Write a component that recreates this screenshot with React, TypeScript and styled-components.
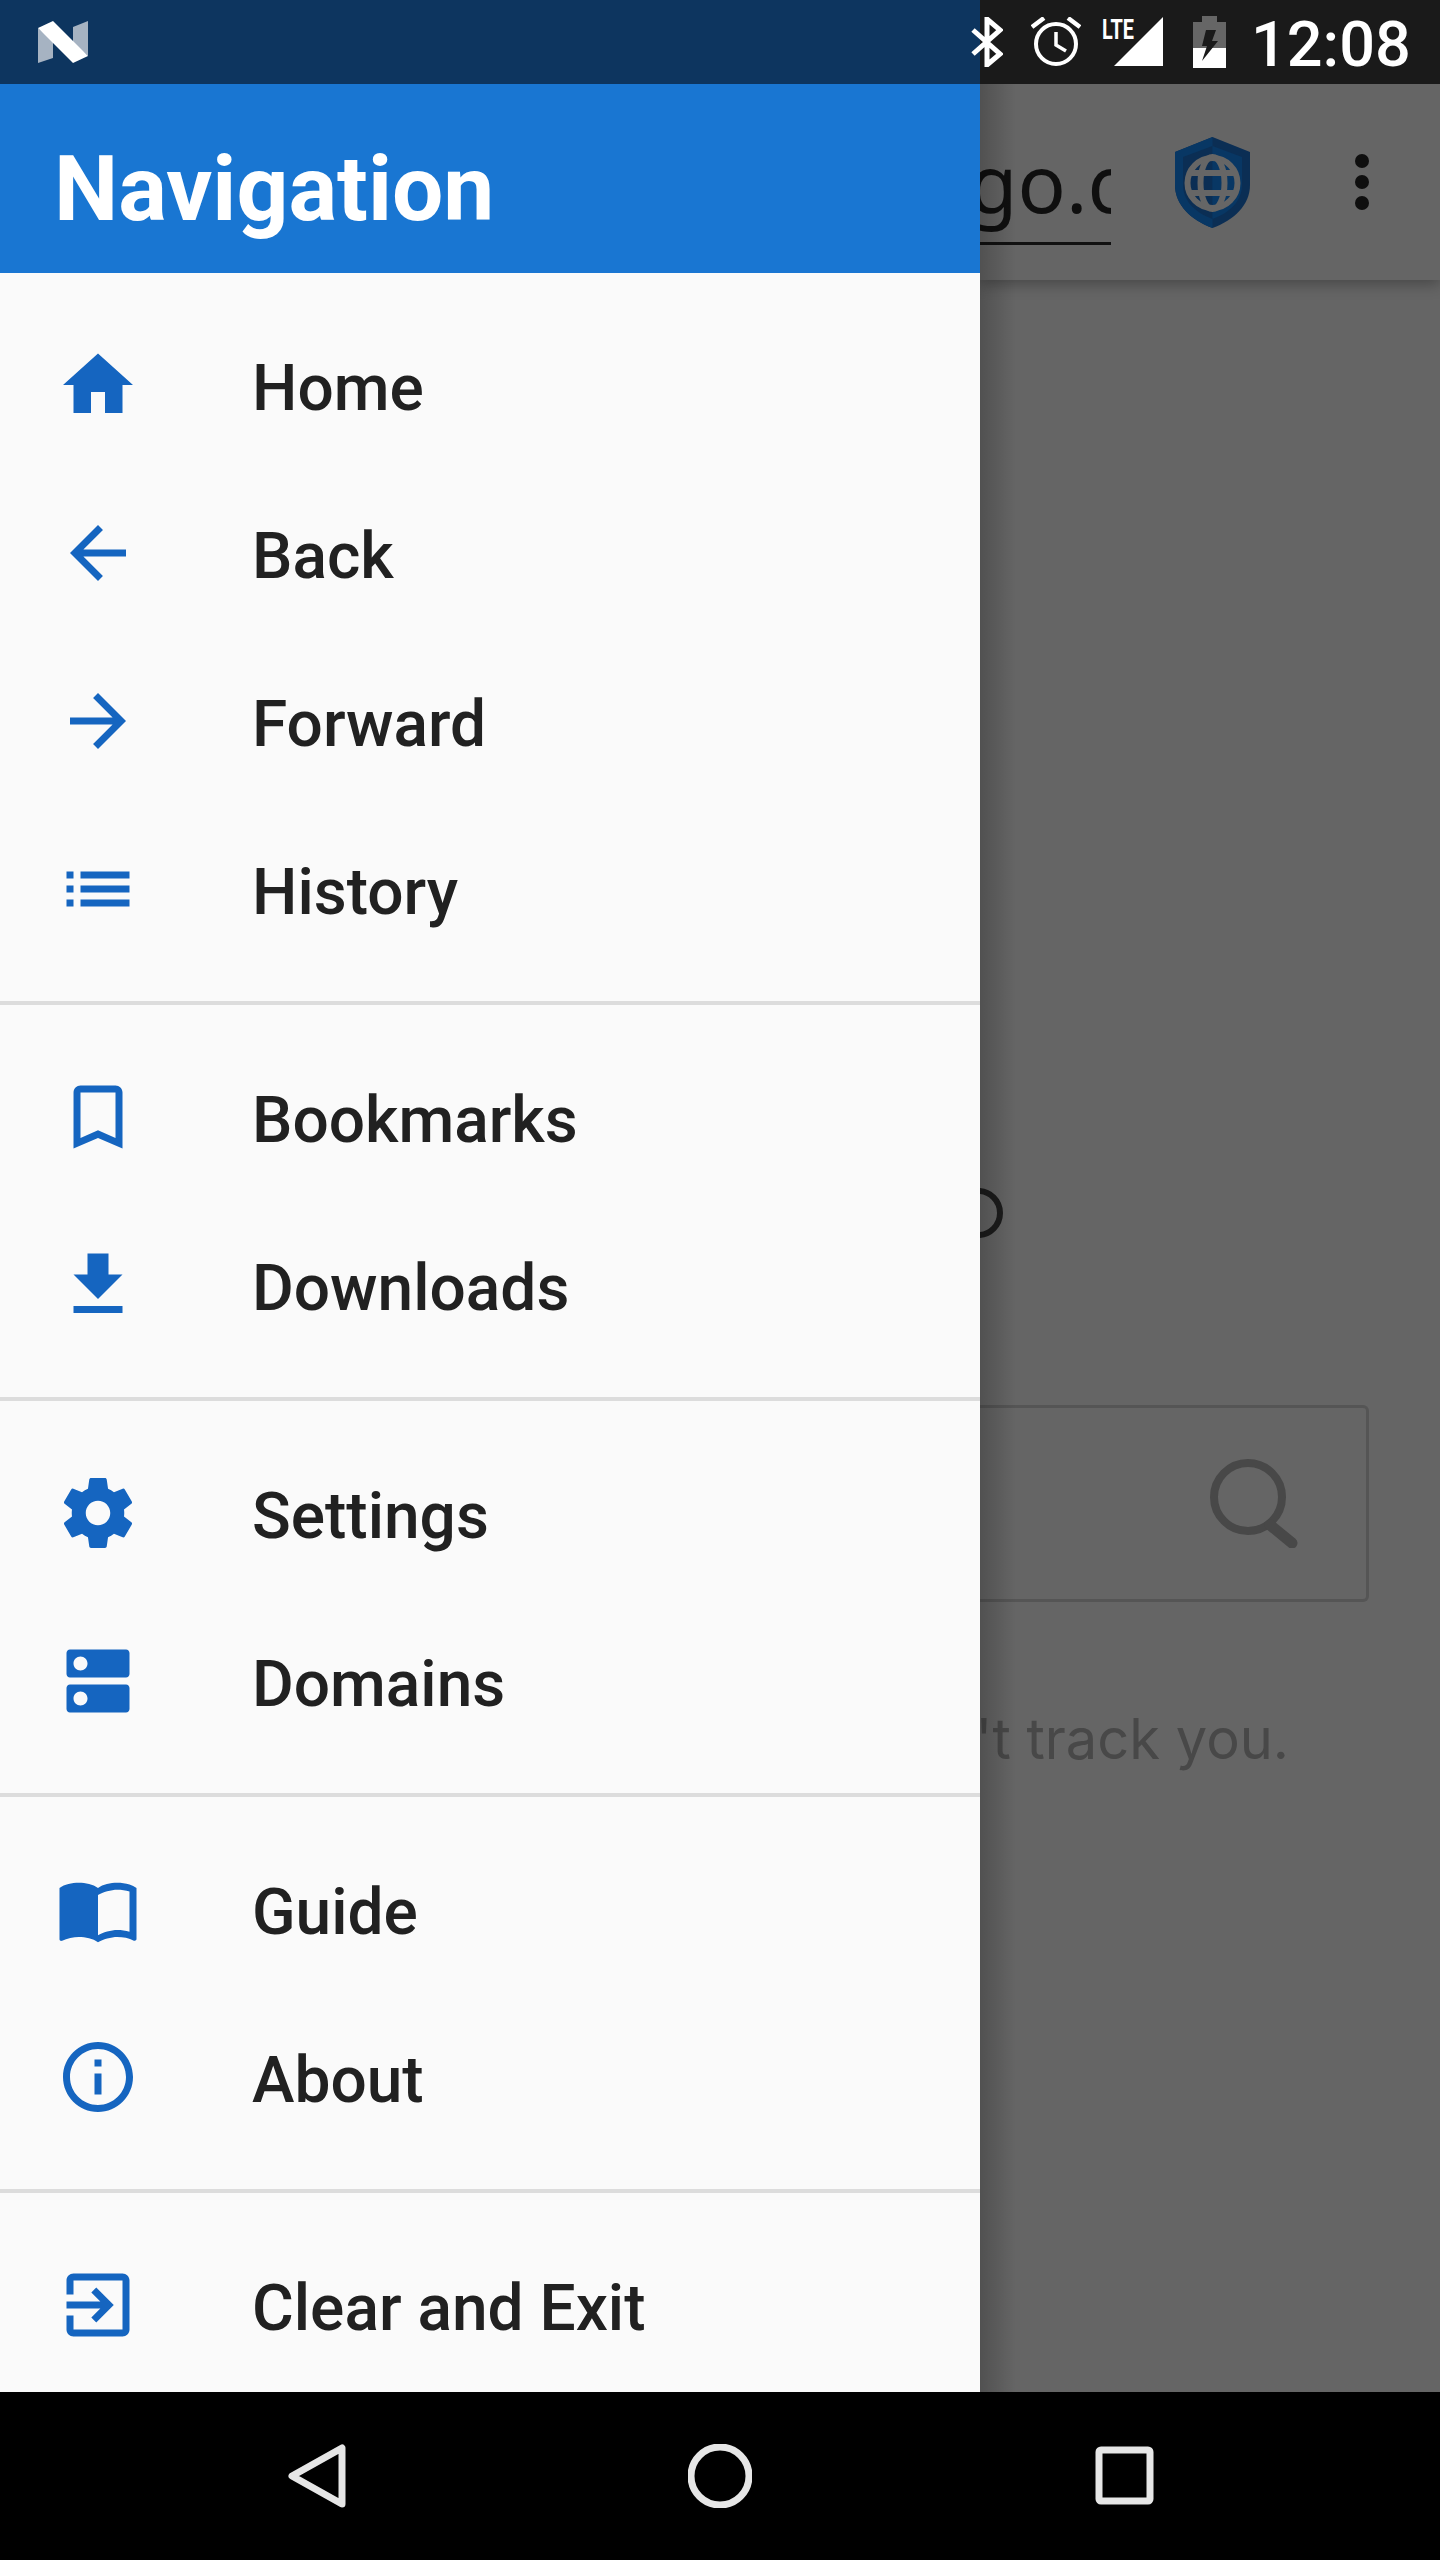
import React from 'react';
import styled, { createGlobalStyle } from 'styled-components';

const GlobalStyle = createGlobalStyle`
  html, body {
    margin: 0;
    padding: 0;
    background: #000;
  }
  * {
    box-sizing: border-box;
  }
`;

const Screen = styled.div`
  width: 1440px;
  height: 2560px;
  display: grid;
  grid-template-columns: 980px 460px;
  grid-template-rows: 84px 2308px 168px;
  font-family: Roboto, 'Liberation Sans', sans-serif;
  overflow: hidden;
`;

const StatusLeft = styled.div`
  background: #0d355f;
  display: flex;
  align-items: center;
  padding-left: 38px;
`;

const StatusRight = styled.div`
  background: #1a1a1a;
  display: flex;
  align-items: center;
  color: #fff;
`;

const StatusIcon = styled.svg<{ $gap?: number }>`
  display: block;
  flex: none;
  margin-left: ${(p) => p.$gap ?? 0}px;
`;

const Clock = styled.span`
  font-size: 63px;
  font-weight: 500;
  margin: 6px 0 0 25px;
  line-height: 78px;
`;

const Drawer = styled.nav`
  background: #fafafa;
  display: flex;
  flex-direction: column;
  overflow: hidden;
`;

const DrawerHeader = styled.header`
  flex: none;
  height: 189px;
  background: #1976d2;
  color: #fff;
  font-size: 91px;
  font-weight: 700;
  display: flex;
  align-items: center;
  padding: 20px 0 0 54px;
`;

const Section = styled.div`
  flex: none;
  display: flex;
  flex-direction: column;
  padding: 28px 0;
  border-bottom: 4px solid #dcdcdc;

  &:last-child {
    border-bottom: 0;
  }
`;

const Row = styled.div`
  height: 168px;
  display: flex;
  align-items: center;
  padding-left: 56px;
  gap: 112px;
  color: #212121;
  font-size: 64px;
  font-weight: 500;
`;

const RowLabel = styled.span`
  margin-top: 6px;
`;

const NavIcon = styled.svg`
  width: 84px;
  height: 84px;
  fill: #1565c0;
  flex: none;
`;

const Behind = styled.main`
  background: #656565;
  display: flex;
  flex-direction: column;
  overflow: hidden;
  position: relative;

  /* shadow the open drawer drops on the page */
  &::after {
    content: '';
    position: absolute;
    top: 0;
    bottom: 0;
    left: 0;
    width: 36px;
    background: linear-gradient(to right, rgba(0, 0, 0, 0.2), rgba(0, 0, 0, 0));
  }
`;

const Toolbar = styled.div`
  height: 196px;
  flex: none;
  display: flex;
  align-items: center;
  box-shadow: 0 4px 14px rgba(0, 0, 0, 0.3);
`;

const UrlField = styled.div`
  width: 131px;
  height: 124px;
  margin-top: 2px;
  display: flex;
  justify-content: flex-end;
  align-items: center;
  overflow: hidden;
  border-bottom: 3px solid #111;
  color: #0f0f0f;
  font-family: 'Noto Sans', sans-serif;
  font-size: 80px;
  white-space: nowrap;
`;

const UrlText = styled.span`
  flex: none;
  margin-right: -138px;
`;

const Shield = styled.svg`
  width: 75px;
  height: 91px;
  flex: none;
  margin-left: 64px;
`;

const Overflow = styled.svg`
  width: 14px;
  height: 56px;
  flex: none;
  margin-left: 105px;
`;

const PageBody = styled.div`
  flex: 1;
  display: flex;
  flex-direction: column;
  padding-top: 908px;
`;

const LogoArc = styled.svg`
  display: block;
  width: 23px;
  height: 50px;
`;

const SearchBox = styled.div`
  width: 389px;
  height: 197px;
  margin-top: 167px;
  border: 3px solid #555555;
  border-left: 0;
  border-radius: 0 6px 6px 0;
  display: flex;
  align-items: center;
  justify-content: flex-end;
  padding-right: 68px;
`;

const SearchIcon = styled.svg`
  width: 88px;
  height: 89px;
`;

const Tagline = styled.div`
  margin-top: 97px;
  width: 309px;
  display: flex;
  justify-content: flex-end;
  overflow: hidden;
  color: #484848;
  font-family: Inter, sans-serif;
  font-size: 56px;
  line-height: 80px;
  white-space: nowrap;
`;

const NavBar = styled.footer`
  grid-column: 1 / 3;
  background: #000;
  display: flex;
  align-items: center;
  justify-content: center;
  gap: 340px;
`;

const SoftKey = styled.svg`
  width: 64px;
  height: 64px;
  fill: none;
  stroke: #e6e6e6;
  stroke-width: 7;
  stroke-linejoin: round;
`;

const items = {
  home: 'M10 20v-6h4v6h5v-8h3L12 3 2 12h3v8z',
  back: 'M20 11H7.83l5.59-5.59L12 4l-8 8 8 8 1.41-1.41L7.83 13H20v-2z',
  forward: 'M12 4l-1.41 1.41L16.17 11H4v2h12.17l-5.58 5.59L12 20l8-8z',
  history:
    'M3 13h2v-2H3v2zm0 4h2v-2H3v2zm0-8h2V7H3v2zm4 4h14v-2H7v2zm0 4h14v-2H7v2zM7 7v2h14V7H7z',
  bookmarks:
    'M17 3H7c-1.1 0-1.99.9-1.99 2L5 21l7-3 7 3V5c0-1.1-.9-2-2-2zm0 15l-5-2.18L7 18V5h10v13z',
  downloads: 'M19 9h-4V3H9v6H5l7 7 7-7zM5 18v2h14v-2H5z',
  settings:
    'M19.43 12.98c.04-.32.07-.64.07-.98s-.03-.66-.07-.98l2.11-1.65c.19-.15.24-.42.12-.64l-2-3.46c-.12-.22-.39-.3-.61-.22l-2.49 1c-.52-.4-1.08-.73-1.69-.98l-.38-2.65C14.46 2.18 14.25 2 14 2h-4c-.25 0-.46.18-.49.42l-.38 2.65c-.61.25-1.17.59-1.69.98l-2.49-1c-.23-.09-.49 0-.61.22l-2 3.46c-.13.22-.07.49.12.64l2.11 1.65c-.04.32-.07.65-.07.98s.03.66.07.98l-2.11 1.65c-.19.15-.24.42-.12.64l2 3.46c.12.22.39.3.61.22l2.49-1c.52.4 1.08.73 1.69.98l.38 2.65c.03.24.24.42.49.42h4c.25 0 .46-.18.49-.42l.38-2.65c.61-.25 1.17-.59 1.69-.98l2.49 1c.23.09.49 0 .61-.22l2-3.46c.12-.22.07-.49-.12-.64l-2.11-1.65zM12 15.5c-1.93 0-3.5-1.57-3.5-3.5s1.57-3.5 3.5-3.5 3.5 1.57 3.5 3.5-1.57 3.5-3.5 3.5z',
  domains:
    'M20 13H4c-.55 0-1 .45-1 1v6c0 .55.45 1 1 1h16c.55 0 1-.45 1-1v-6c0-.55-.45-1-1-1zM7 19c-1.1 0-2-.9-2-2s.9-2 2-2 2 .9 2 2-.9 2-2 2zM20 3H4c-.55 0-1 .45-1 1v6c0 .55.45 1 1 1h16c.55 0 1-.45 1-1V4c0-.55-.45-1-1-1zM7 9c-1.1 0-2-.9-2-2s.9-2 2-2 2 .9 2 2-.9 2-2 2z',
  guide:
    'M21 5c-1.11-.35-2.33-.5-3.5-.5-1.95 0-4.05.4-5.5 1.5-1.45-1.1-3.55-1.5-5.5-1.5S2.45 4.9 1 6v14.65c0 .25.25.5.5.5.1 0 .15-.05.25-.05C3.1 20.45 5.05 20 6.5 20c1.95 0 4.05.4 5.5 1.5 1.35-.85 3.8-1.5 5.5-1.5 1.65 0 3.35.3 4.75 1.05.1.05.15.05.25.05.25 0 .5-.25.5-.5V6c-.6-.45-1.25-.75-2-1zm0 13.5c-1.1-.35-2.3-.5-3.5-.5-1.7 0-4.15.65-5.5 1.5V8c1.35-.85 3.8-1.5 5.5-1.5 1.2 0 2.4.15 3.5.5v11.5z',
  about:
    'M11 17h2v-6h-2v6zm1-15C6.48 2 2 6.48 2 12s4.48 10 10 10 10-4.48 10-10S17.52 2 12 2zm0 18c-4.41 0-8-3.59-8-8s3.59-8 8-8 8 3.59 8 8-3.59 8-8 8zM11 9h2V7h-2v2z',
  exit: 'M10.09 15.59L11.5 17l5-5-5-5-1.41 1.41L12.67 11H3v2h9.67l-2.58 2.59zM19 3H5c-1.11 0-2 .9-2 2v4h2V5h14v14H5v-4H3v4c0 1.1.89 2 2 2h14c1.1 0 2-.9 2-2V5c0-1.1-.9-2-2-2z',
};

const sections = [
  [
    ['Home', items.home],
    ['Back', items.back],
    ['Forward', items.forward],
    ['History', items.history],
  ],
  [
    ['Bookmarks', items.bookmarks],
    ['Downloads', items.downloads],
  ],
  [
    ['Settings', items.settings],
    ['Domains', items.domains],
  ],
  [
    ['Guide', items.guide],
    ['About', items.about],
  ],
  [['Clear and Exit', items.exit]],
];

function NotificationLogo() {
  return (
    <StatusIcon width="50" height="42" viewBox="0 0 50 42">
      <path d="M0 7v35l15-5V20z" fill="#a6b3c2" />
      <path d="M35 6l15-6v35L35 22z" fill="#a6b3c2" />
      <path d="M0 7L15 0l35 35-15 7z" fill="#fff" />
    </StatusIcon>
  );
}

export default function App() {
  return (
    <Screen>
      <GlobalStyle />
      <StatusLeft>
        <NotificationLogo />
      </StatusLeft>
      <StatusRight>
        <StatusIcon $gap={-9} width="32" height="50" viewBox="0 0 32 50">
          <path
            d="M2 13l27 24-13 11V2l13 11L2 37"
            fill="none"
            stroke="#fff"
            strokeWidth="5"
          />
        </StatusIcon>
        <StatusIcon $gap={28} width="50" height="50" viewBox="0 0 50 50">
          <circle cx="25" cy="27" r="20" fill="none" stroke="#fff" strokeWidth="4" />
          <path d="M25 15v13l10 6" fill="none" stroke="#fff" strokeWidth="3.5" />
          <path d="M1 10L13 1M49 10L37 1" fill="none" stroke="#fff" strokeWidth="4.5" />
        </StatusIcon>
        <StatusIcon $gap={21} width="62" height="50" viewBox="0 0 62 50">
          <path d="M12 49L61 0v49z" fill="#fff" />
          <text
            x="0"
            y="22"
            fontFamily="Roboto"
            fontSize="28"
            fontWeight="700"
            fill="#fff"
            textLength="32"
            lengthAdjust="spacingAndGlyphs"
          >
            LTE
          </text>
        </StatusIcon>
        <StatusIcon $gap={29} width="33" height="52" viewBox="0 0 33 52">
          <path d="M9 0h15v6h9v46H0V6h9z" fill="#666" />
          <path d="M0 32h33v20H0z" fill="#fff" />
          <path d="M13 14h10l-4 11h6L9 45l5-15H9z" fill="#1a1a1a" />
        </StatusIcon>
        <Clock>12:08</Clock>
      </StatusRight>
      <Drawer>
        <DrawerHeader>Navigation</DrawerHeader>
        {sections.map((rows, i) => (
          <Section key={i}>
            {rows.map(([label, d]) => (
              <Row key={label}>
                <NavIcon viewBox="0 0 24 24">
                  <path d={d} />
                </NavIcon>
                <RowLabel>{label}</RowLabel>
              </Row>
            ))}
          </Section>
        ))}
      </Drawer>
      <Behind>
        <Toolbar>
          <UrlField>
            <UrlText>duckduckgo.com</UrlText>
          </UrlField>
          <Shield viewBox="0 0 75 91">
            <path d="M37.5 0L75 15v33c0 20-16 35-37.5 43C16 83 0 68 0 48V15z" fill="#0b2e54" />
            <path d="M37.5 0v91C16 83 0 68 0 48V15z" fill="#083764" />
            <path d="M37.5 9v73C18 75 8 62 8 48V20z" fill="#0b2e54" />
            <path d="M37.5 9L67 20v28c0 14-10 27-29.5 34z" fill="#083764" />
            <g fill="none" stroke="#666" strokeWidth="6">
              <circle cx="37.5" cy="46" r="25" />
              <ellipse cx="37.5" cy="46" rx="12" ry="26" />
              <path d="M14 36h47M14 56h47" />
            </g>
          </Shield>
          <Overflow viewBox="0 0 14 56">
            <circle cx="7" cy="7" r="7" fill="#0f0f0f" />
            <circle cx="7" cy="28" r="7" fill="#0f0f0f" />
            <circle cx="7" cy="49" r="7" fill="#0f0f0f" />
          </Overflow>
        </Toolbar>
        <PageBody>
          <LogoArc viewBox="0 0 23 50">
            <circle cx="-2" cy="25" r="22" fill="none" stroke="#1c1c1c" strokeWidth="6" />
          </LogoArc>
          <SearchBox>
            <SearchIcon viewBox="0 0 88 89">
              <circle cx="38" cy="38" r="34" fill="none" stroke="#484848" strokeWidth="8" />
              <path d="M60 66l22 18" stroke="#484848" strokeWidth="11" strokeLinecap="round" />
            </SearchIcon>
          </SearchBox>
          <Tagline>We don't track you.</Tagline>
        </PageBody>
      </Behind>
      <NavBar>
        <SoftKey viewBox="0 0 64 64">
          <path d="M58 4v56L8 32z" />
        </SoftKey>
        <SoftKey viewBox="0 0 64 64">
          <circle cx="32" cy="32" r="29" />
        </SoftKey>
        <SoftKey viewBox="0 0 64 64">
          <rect x="7" y="6" width="51" height="51" rx="2" />
        </SoftKey>
      </NavBar>
    </Screen>
  );
}
